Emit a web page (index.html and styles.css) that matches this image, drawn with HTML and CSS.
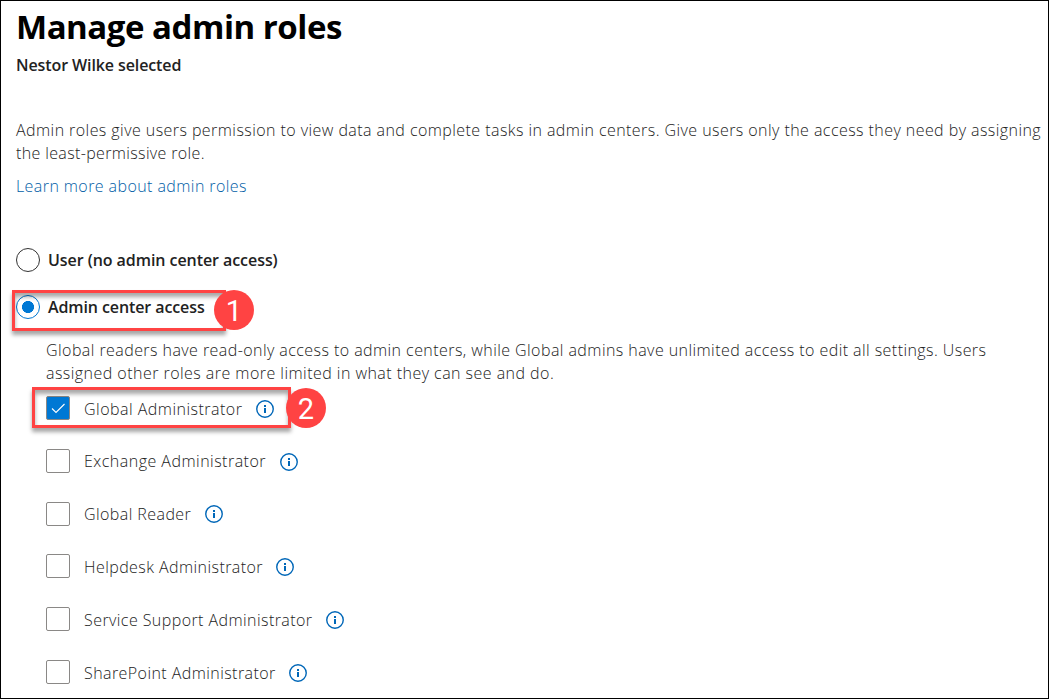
FILE: index.html
```html
<!DOCTYPE html>
<html lang="en">
<head>
<meta charset="utf-8">
<title>Manage admin roles</title>
<link rel="stylesheet" href="styles.css">
</head>
<body>
<svg class="defs" width="0" height="0"><defs><symbol id="info" viewBox="0 0 18 18"><circle cx="9" cy="9" r="8.25" fill="none" stroke="currentColor" stroke-width="1.4"/><path d="M8 5h2v2H8zM8 8h2v5H8z" fill="currentColor"/></symbol></defs></svg>
<main class="panel">
  <h1 class="title"><span>Manage admin roles</span></h1>
  <p class="subtitle"><span>Nestor Wilke selected</span></p>
  <p class="intro"><span class="intro-first">Admin roles give users permission to view data and complete tasks in admin centers. Give users only the access they need by assigning</span><br><span class="intro-second">the least-permissive role.</span></p>
  <a class="link"><span>Learn more about admin roles</span></a>
  <div class="option option-user"><span class="radio"></span><span class="option-label user-label">User (no admin center access)</span></div>
  <div class="option option-admin"><span class="radio radio-on"></span><span class="option-label admin-label">Admin center access</span><div class="mark mark-one"></div><b class="badge badge-one">1</b></div>
  <p class="hint"><span class="hint-first">Global readers have read-only access to admin centers, while Global admins have unlimited access to edit all settings. Users</span><br><span class="hint-second">assigned other roles are more limited in what they can see and do.</span></p>
  <div class="roles">
    <div class="role"><span class="box box-on"><svg width="24" height="24" viewBox="0 0 24 24"><path d="M6 12.5l4 4 8.5-8.5" fill="none" stroke="#fff" stroke-width="1.1"/></svg></span><span class="name name-ga">Global Administrator</span><svg class="info"><use href="#info"/></svg><div class="mark mark-two"></div><b class="badge badge-two">2</b></div>
    <div class="role"><span class="box"></span><span class="name name-ex">Exchange Administrator</span><svg class="info"><use href="#info"/></svg></div>
    <div class="role"><span class="box"></span><span class="name name-gr">Global Reader</span><svg class="info"><use href="#info"/></svg></div>
    <div class="role"><span class="box"></span><span class="name name-hd">Helpdesk Administrator</span><svg class="info"><use href="#info"/></svg></div>
    <div class="role"><span class="box"></span><span class="name name-ss">Service Support Administrator</span><svg class="info"><use href="#info"/></svg></div>
    <div class="role"><span class="box"></span><span class="name name-sp">SharePoint Administrator</span><svg class="info"><use href="#info"/></svg></div>
  </div>
</main>
</body>
</html>
```
FILE: styles.css
```css
* { box-sizing: border-box; }
body { margin: 0; background: #fff; font-family: "Open Sans", "Noto Sans", sans-serif; font-size: 16px; color: #222; }
.defs { display: block; height: 0; }
.panel { width: 1049px; height: 699px; border: 1px solid #000; padding-left: 15px; overflow: hidden; white-space: nowrap; }
.title { margin: 0; height: 52px; font-size: 33px; line-height: 52px; font-weight: 700; letter-spacing: -.47px; color: #000; }
.subtitle { margin: 0; height: 24px; line-height: 24px; font-weight: 600; letter-spacing: -.1px; }
.intro { margin: 42px 0 0; line-height: 23px; font-weight: 300; letter-spacing: .437px; }
.intro-second { letter-spacing: .36px; }
.link { display: block; margin-top: 9px; height: 24px; line-height: 24px; font-weight: 300; letter-spacing: .42px; color: #005da6; }
.option { position: relative; display: flex; align-items: center; height: 24px; }
.option-user { margin-top: 50px; }
.option-admin { margin-top: 23px; }
.radio { width: 24px; height: 24px; border: 1px solid #333; border-radius: 50%; }
.radio-on { border-color: #0078d4; background: radial-gradient(circle, #0078d4 0 5.7px, transparent 6.3px); }
.option-label { margin-left: 8px; font-weight: 600; letter-spacing: -.06px; }
.admin-label { letter-spacing: -.1px; }
.hint { margin: 20px 0 0 30px; line-height: 23px; font-weight: 300; letter-spacing: .435px; }
.hint-second { letter-spacing: .46px; }
.roles { display: grid; row-gap: 28.75px; margin: 11px 0 0 30px; }
.role { position: relative; display: flex; align-items: center; height: 24px; }
.box { width: 24px; height: 24px; border: 1px solid #8a8886; border-radius: 2px; }
.box-on { background: #0078d4; }
.box-on svg { display: block; margin: -1px; }
.name { margin-left: 14px; padding-top: 2px; font-weight: 300; letter-spacing: .43px; }
.name-ga, .name-ex { letter-spacing: .48px; }
.name-ex, .name-gr { padding-top: 0; }
.info { width: 18px; height: 18px; margin: 2px 0 0 13.5px; color: #0067b8; }
.name-ga + .info { margin-left: 14px; }
.name-gr + .info { margin-top: 0; }
.mark { position: absolute; height: 41px; border: 3px solid #ff4343; box-shadow: 0 4px 4px rgba(0,0,0,.35), inset 0 4px 4px rgba(0,0,0,.35); }
.mark-one { left: -4px; top: -5px; width: 214px; }
.mark-two { left: -14px; top: -9px; width: 259px; }
.badge { position: absolute; width: 40px; height: 40px; border-radius: 50%; background: #ff4343; color: #fff; font: 400 29px/43px Roboto, sans-serif; text-align: center; }
.badge-one { left: 198px; top: -5px; }
.badge-two { left: 240px; top: -8px; }
```
